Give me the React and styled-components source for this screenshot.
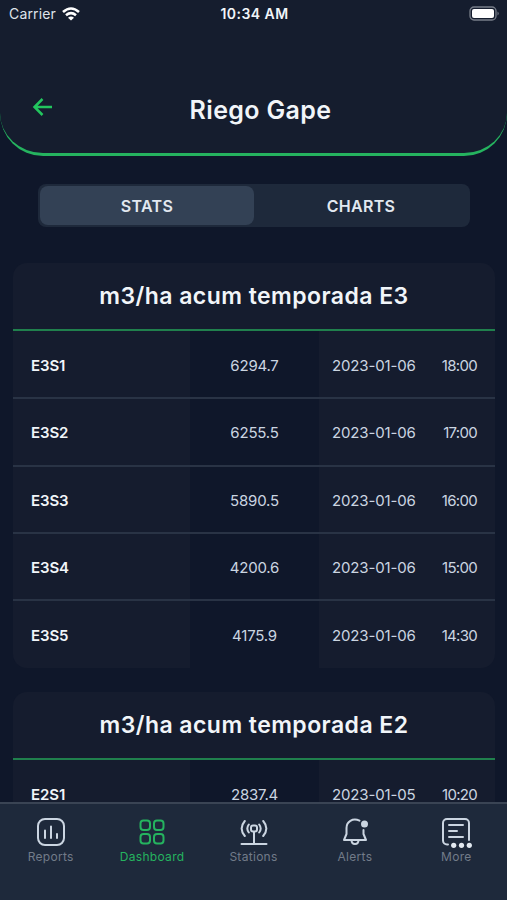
import React from 'react'
import styled, { createGlobalStyle } from 'styled-components'

const GlobalStyle = createGlobalStyle`
  * {
    box-sizing: border-box;
  }
  body {
    margin: 0;
    background: #0f172a;
    font-family: Inter, sans-serif;
    color: #f1f5f9;
  }
`

const Screen = styled.div`
  display: flex;
  flex-direction: column;
  height: 900px;
  overflow: hidden;
  background: #0f172a;
`

const Header = styled.header`
  flex: none;
  height: 156px;
  background: #151d2e;
  border-bottom: 3px solid #25b35f;
  border-radius: 0 0 43px 43px;
`

const StatusBar = styled.div`
  display: grid;
  grid-template-columns: 1fr auto 1fr;
  align-items: center;
  height: 27px;
  padding: 0 7px 0 9px;
  font-size: 14px;
`

const Carrier = styled.div`
  display: flex;
  align-items: center;
  gap: 6px;
  letter-spacing: 0.15px;
  line-height: 16px;
  color: #dfe3ea;
`

const Clock = styled.div`
  font-weight: 600;
  letter-spacing: 0.45px;
  line-height: 16px;
`

const BatteryIcon = styled.svg`
  justify-self: end;
`

const TitleRow = styled.div`
  display: grid;
  grid-template-columns: 60px 1fr 46px;
  align-items: center;
  height: 60px;
  margin-top: 52px;
`

const BackButton = styled.button`
  display: flex;
  width: 20px;
  margin: -4px 0 0 32px;
  padding: 0;
  border: 0;
  background: none;
`

const Title = styled.h1`
  margin: 1px 0 0;
  text-align: center;
  font-size: 25px;
  font-weight: 600;
  line-height: 36px;
  letter-spacing: 0.35px;
`

const Content = styled.main`
  flex: 1;
  min-height: 0;
  overflow: hidden;
  padding: 28px 12px 0 13px;
`

const Toggle = styled.div`
  display: flex;
  width: 432px;
  height: 43px;
  margin: 0 0 36px 25px;
  padding: 2px;
  border-radius: 8px;
  background: #1e293b;
`

const ToggleItem = styled.div`
  flex: 1;
  display: flex;
  align-items: center;
  justify-content: center;
  border-radius: 8px;
  background: ${({ active }) => (active ? '#334155' : 'transparent')};
  color: #e2e8f0;
  font-size: 16px;
  font-weight: 600;
  letter-spacing: 0.3px;
`

const Card = styled.section`
  height: 405px;
  margin-bottom: 24px;
  border-radius: 14px;
  overflow: hidden;
  background: #151c2e;
`

const CardTitle = styled.h2`
  margin: 0;
  height: 68px;
  border-bottom: 2px solid #20804d;
  text-align: center;
  font-size: 23px;
  font-weight: 600;
  line-height: 67px;
  letter-spacing: 0.45px;
`

const Row = styled.div`
  display: grid;
  grid-template-columns: 177px 129px 1fr;
  height: 67.3px;
  border-bottom: 2px solid #293345;
  font-size: 15px;

  &:nth-child(2) {
    height: 68.3px;
  }
  &:nth-child(6) {
    border-bottom: 0;
  }
`

const Cell = styled.div`
  display: flex;
  align-items: center;
  color: #cbd5e1;
  padding-top: 2px;
`

const Name = styled(Cell)`
  padding-left: 18px;
  font-weight: 600;
  letter-spacing: -0.1px;
  color: #f1f5f9;
`

const Value = styled(Cell)`
  justify-content: center;
  letter-spacing: -0.2px;
  background: #0f172a;
`

const Moment = styled(Cell)`
  justify-content: space-between;
  padding-left: 13px;
  padding-right: 18px;
  letter-spacing: -0.15px;
`

const Time = styled.span`
  letter-spacing: -0.7px;
`

const TabBar = styled.nav`
  flex: none;
  display: flex;
  height: 98px;
  border-top: 2px solid #3a4454;
  background: #1e293b;
`

const Tab = styled.div`
  flex: 1;
  display: flex;
  flex-direction: column;
  align-items: center;
  padding-top: 12px;
  font-size: 12px;
  letter-spacing: 0.3px;
  line-height: 17px;
  color: ${({ active }) => (active ? '#25b35f' : '#727b89')};
`

const TabIcon = styled.svg`
  width: 32px;
  height: 32px;
  fill: none;
  stroke: ${({ active }) => (active ? '#25b35f' : '#cbd5e1')};
  stroke-width: 2;
  stroke-linecap: round;
  stroke-linejoin: round;
`

const cards = [
  {
    title: 'm3/ha acum temporada E3',
    rows: [
      ['E3S1', '6294.7', '2023-01-06', '18:00'],
      ['E3S2', '6255.5', '2023-01-06', '17:00'],
      ['E3S3', '5890.5', '2023-01-06', '16:00'],
      ['E3S4', '4200.6', '2023-01-06', '15:00'],
      ['E3S5', '4175.9', '2023-01-06', '14:30'],
    ],
  },
  {
    title: 'm3/ha acum temporada E2',
    rows: [['E2S1', '2837.4', '2023-01-05', '10:20']],
  },
]

const tabs = [
  {
    label: 'Reports',
    icon: (
      <>
        <rect x="3" y="3" width="26" height="26" rx="7" />
        <path d="M10 14.5V22M16 10.5V22M22 18V22" />
      </>
    ),
  },
  {
    label: 'Dashboard',
    active: true,
    icon: (
      <>
        <rect x="4.5" y="4.5" width="9.500" height="9.500" rx="3" />
        <rect x="18" y="4.5" width="9.500" height="9.500" rx="3" />
        <rect x="4.5" y="18" width="9.500" height="9.500" rx="3" />
        <rect x="18" y="18" width="9.500" height="9.500" rx="3" />
      </>
    ),
  },
  {
    label: 'Stations',
    icon: (
      <>
        <rect x="13" y="9.5" width="6" height="6" rx="2" />
        <path d="M16 16V28M3.5 28H28.5" />
        <path d="M10.8 8.5Q7.800 12.500 10.800 16.500M21.200 8.500Q24.200 12.500 21.200 16.500M6.800 5Q0.500 12.500 6.800 20M25.200 5Q31.500 12.500 25.200 20" />
      </>
    ),
  },
  {
    label: 'Alerts',
    icon: (
      <>
        <path d="M20.500 4.700C13.500 1.500 7.500 6 7.500 12V18L5 24H27L24.500 18V14M12.500 24C12.500 29.300 19.500 29.300 19.500 24" />
        <circle cx="25.500" cy="8" r="2.500" fill="#cbd5e1" />
      </>
    ),
  },
  {
    label: 'More',
    icon: (
      <>
        <path d="M8 28.500H7A4 4 0 0 1 3 24.500V7A4 4 0 0 1 7 3H25A4 4 0 0 1 29 7V24" />
        <path d="M9 9H23M9 15H17M9 21H23" />
        <g fill="#e2e8f0" stroke="none">
          <circle cx="13.700" cy="29.300" r="2.600" />
          <circle cx="21.500" cy="29.300" r="2.600" />
          <circle cx="29.300" cy="29.300" r="2.600" />
        </g>
      </>
    ),
  },
]

const StatsCard = ({ title, rows }) => (
  <Card>
    <CardTitle>{title}</CardTitle>
    {rows.map(([name, value, date, time]) => (
      <Row key={name}>
        <Name>{name}</Name>
        <Value>{value}</Value>
        <Moment>
          <span>{date}</span>
          <Time>{time}</Time>
        </Moment>
      </Row>
    ))}
  </Card>
)

const App = () => {
  return (
    <>
      <GlobalStyle />
      <Screen>
        <Header>
          <StatusBar>
            <Carrier>
              Carrier
              <svg width="18" height="14" viewBox="0 0 18 14" fill="none" stroke="#fff" strokeWidth="2.6">
                <path d="M1 5Q9 -2 17 5M4 8.2Q9 4 14 8.2" />
                <path d="M9 13.5L6 10.7Q9 8.5 12 10.7Z" fill="#fff" stroke="none" />
              </svg>
            </Carrier>
            <Clock>10:34 AM</Clock>
            <BatteryIcon width="31" height="15" viewBox="0 0 31 15">
              <rect x="1" y="1" width="26" height="13" rx="4" fill="none" stroke="#777d89" strokeWidth="1.3" />
              <rect x="3" y="3" width="22" height="9" rx="2" fill="#fff" />
              <path d="M28.5 5.5Q31 7.5 28.5 9.5Z" fill="#777d89" />
            </BatteryIcon>
          </StatusBar>
          <TitleRow>
            <BackButton aria-label="Back">
              <svg width="20" height="18" viewBox="0 0 20 18" fill="none" stroke="#22c55e" strokeWidth="2.5">
                <path d="M10.5 1L2.5 9L10.5 17M2.5 9H20" />
              </svg>
            </BackButton>
            <Title>Riego Gape</Title>
          </TitleRow>
        </Header>
        <Content>
          <Toggle>
            <ToggleItem active>STATS</ToggleItem>
            <ToggleItem>CHARTS</ToggleItem>
          </Toggle>
          {cards.map((card) => (
            <StatsCard key={card.title} {...card} />
          ))}
        </Content>
        <TabBar>
          {tabs.map(({ label, active, icon }) => (
            <Tab key={label} active={active}>
              <TabIcon viewBox="0 0 32 32" active={active}>{icon}</TabIcon>
              {label}
            </Tab>
          ))}
        </TabBar>
      </Screen>
    </>
  )
}

export default App
